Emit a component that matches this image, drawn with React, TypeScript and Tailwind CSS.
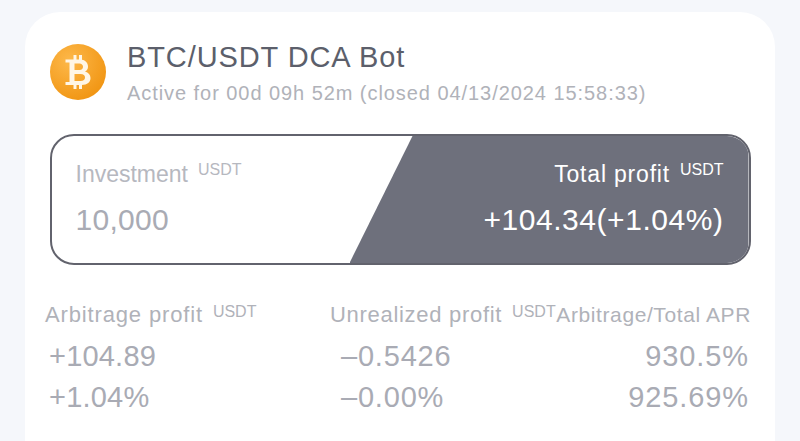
import React from "react";

const font = "font-['Liberation_Sans','Noto_Sans',sans-serif]";

const Unit = ({ className = "top-[-7px]" }: { className?: string }) => (
  <sup className={`ml-[10px] text-[16px] leading-none relative align-baseline tracking-[0px] ${className}`}>USDT</sup>
);

const BitcoinLogo = () => (
  <svg width="56" height="56" viewBox="0 0 56 56">
    <defs>
      <radialGradient id="coin" cx="35%" cy="30%" r="80%">
        <stop offset="0%" stopColor="#fdb84a" />
        <stop offset="100%" stopColor="#f0930f" />
      </radialGradient>
    </defs>
    <circle cx="28" cy="28" r="28" fill="url(#coin)" />
    <g transform="translate(15.5 11)" fill="#fff6e6">
      <path d="M8 0h3v5H8zM13.5 0h3v5h-3zM8 29h3v5H8zM13.5 29h3v5h-3z" />
      <path
        fillRule="evenodd"
        d="M0 4.5H14C20 4.5 22.5 8 22.5 11.5C22.5 14 21.5 15.5 19.5 16.5C23 17.5 25 20 25 23C25 27 22 30 16 30H0V27H4V7.5H0ZM9 8.5V15H14C16.5 15 17.5 13.5 17.5 11.7C17.5 9.8 16 8.5 14 8.5ZM9 19V26H15C18 26 19.5 24.5 19.5 22.5C19.5 20.5 18 19 15 19Z"
      />
    </g>
  </svg>
);

const StatColumn = ({
  label,
  unit,
  values,
  right,
  labelClass,
  valueClass,
}: {
  label: string;
  unit?: boolean;
  values: string[];
  right?: boolean;
  labelClass: string;
  valueClass: string;
}) => (
  <div className={right ? "text-right" : ""}>
    <div className={`leading-[28px] text-[#b0b2b9] whitespace-nowrap ${labelClass}`}>
      {label}
      {unit && <Unit className="top-[-5px]" />}
    </div>
    <div className={`mt-[13px] flex flex-col gap-[13px] text-[29px] leading-[28px] text-[#a9abb4] ${valueClass}`}>
      {values.map((v) => (
        <div key={v}>{v}</div>
      ))}
    </div>
  </div>
);

export default function App() {
  return (
    <div className={`h-[441px] w-[800px] overflow-hidden bg-[#f5f7fb] pt-[12px] ${font}`}>
      <div className="mx-[25px] h-[460px] rounded-t-[35px] bg-white px-[25px] pt-[32px]">
        <div className="flex h-[56px] items-start gap-[21px]">
          <BitcoinLogo />
          <div>
            <div className="text-[29px] leading-[26px] tracking-[0.9px] text-[#5c5f6b]">BTC/USDT DCA Bot</div>
            <div className="mt-[11px] text-[20px] leading-[24px] tracking-[0.94px] text-[#b0b2b9]">
              Active for 00d 09h 52m (closed 04/13/2024 15:58:33)
            </div>
          </div>
        </div>

        <div className="ml-[-0.5px] mt-[34px] flex h-[131px] w-[701px] overflow-hidden rounded-[24px] border-2 border-[#62636d]">
          <div className="flex-1 pl-[24px] pt-[23px]">
            <div className="text-[23px] leading-[30px] text-[#b6b8bf]">
              Investment
              <Unit />
            </div>
            <div className="mt-[15px] text-[30px] leading-[32px] tracking-[0.3px] text-[#a9abb4]">10,000</div>
          </div>
          <div className="w-[399px] bg-[#6e707c] pr-[25px] pt-[23px] text-right text-white [clip-path:polygon(63px_0,100%_0,100%_100%,0_100%)]">
            <div className="text-[23px] leading-[30px] tracking-[0.8px]">
              Total profit
              <Unit />
            </div>
            <div className="mt-[15px] text-[30px] leading-[32px] tracking-[0.55px]">+104.34(+1.04%)</div>
          </div>
        </div>

        <div className="ml-[-5px] mr-[-1px] mt-[36px] grid grid-cols-[285px_1fr_auto]">
          <StatColumn
            label="Arbitrage profit"
            unit
            values={["+104.89", "+1.04%"]}
            labelClass="text-[22px] tracking-[0.85px]"
            valueClass="pl-[4px] tracking-[0.2px]"
          />
          <StatColumn
            label="Unrealized profit"
            unit
            values={["–0.5426", "–0.00%"]}
            labelClass="text-[22px] tracking-[0.7px]"
            valueClass="pl-[11px] tracking-[0.8px]"
          />
          <StatColumn
            label="Arbitrage/Total APR"
            values={["930.5%", "925.69%"]}
            right
            labelClass="text-[21px] tracking-[0.6px]"
            valueClass="pr-[2px] tracking-[0.9px]"
          />
        </div>
      </div>
    </div>
  );
}
